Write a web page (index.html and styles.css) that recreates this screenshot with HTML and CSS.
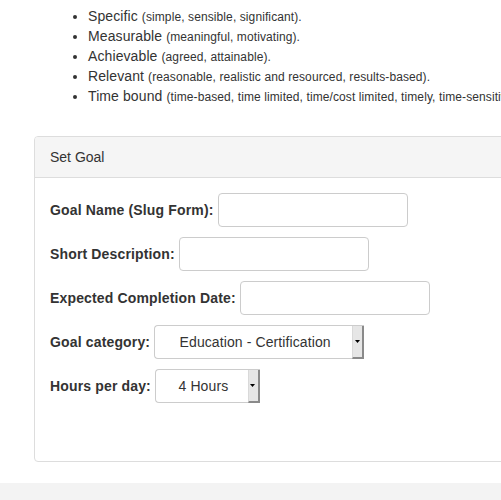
FILE: index.html
```html
<!DOCTYPE html>
<html lang="en">
<head>
<meta charset="utf-8">
<title>Set Goal</title>
<link rel="stylesheet" href="styles.css">
</head>
<body>
<div class="page">
  <ul class="smart">
    <li>Specific <small>(simple, sensible, significant).</small></li>
    <li>Measurable <small>(meaningful, motivating).</small></li>
    <li>Achievable <small>(agreed, attainable).</small></li>
    <li>Relevant <small>(reasonable, realistic and resourced, results-based).</small></li>
    <li>Time bound <small>(time-based, time limited, time/cost limited, timely, time-sensitive).</small></li>
  </ul>

  <section class="panel">
    <div class="panel-heading">Set Goal</div>
    <form class="panel-body">
      <div class="row">
        <label for="slug">Goal Name (Slug Form):</label>
        <input id="slug" class="field" type="text">
      </div>
      <div class="row">
        <label for="desc">Short Description:</label>
        <input id="desc" class="field" type="text">
      </div>
      <div class="row">
        <label for="date">Expected Completion Date:</label>
        <input id="date" class="field" type="text">
      </div>
      <div class="row">
        <label for="cat">Goal category:</label>
        <div class="select select-wide">
          <select id="cat"><option>Education - Certification</option></select>
          <span class="select-btn"><svg width="5" height="3" viewBox="0 0 5 3"><polygon points="0,0 5,0 2.5,3" fill="#000"/></svg></span>
        </div>
      </div>
      <div class="row">
        <label for="hours">Hours per day:</label>
        <div class="select select-narrow">
          <select id="hours"><option>4 Hours</option></select>
          <span class="select-btn"><svg width="5" height="3" viewBox="0 0 5 3"><polygon points="0,0 5,0 2.5,3" fill="#000"/></svg></span>
        </div>
      </div>
    </form>
  </section>

  <div class="band"></div>
</div>
</body>
</html>
```

FILE: styles.css
```css
html, body {
  margin: 0;
  padding: 0;
  background: #fff;
}

.page {
  width: 501px;
  height: 500px;
  overflow: hidden;
  font-family: "Liberation Sans", Arial, Helvetica, sans-serif;
  font-size: 14px;
  color: #333;
}

.smart {
  margin: 6px 0 0;
  padding-left: 88px;
  line-height: 20px;
  letter-spacing: 0.1px;
}

.smart li {
  white-space: nowrap;
  height: 20px;
}

.smart small {
  font-size: 12px;
  line-height: 1;
}

.panel {
  margin: 30px 0 0 34px;
  width: 560px;
  border: 1px solid #ddd;
  border-radius: 4px;
  background: #fff;
}

.panel-heading {
  padding: 10px 15px;
  line-height: 20px;
  background: #f5f5f5;
  border-bottom: 1px solid #ddd;
  border-radius: 3px 3px 0 0;
}

.panel-body {
  margin: 0;
  padding: 15px 15px 48px;
}

.row {
  display: flex;
  align-items: center;
  gap: 4px;
  height: 34px;
  margin-bottom: 10px;
}

.row label {
  font-weight: bold;
  letter-spacing: 0.15px;
}

.field {
  box-sizing: border-box;
  width: 190px;
  height: 34px;
  margin: 0;
  padding: 6px 12px;
  border: 1px solid #ccc;
  border-radius: 4px;
  background: #fff;
  font: inherit;
}

.select {
  box-sizing: border-box;
  display: flex;
  height: 34px;
  border: 1px solid #ccc;
  border-right: none;
  border-radius: 4px 0 0 4px;
  background: #fff;
}

.select-wide { width: 210px; }
.select-narrow { width: 105px; }

.select select {
  flex: 1;
  min-width: 0;
  appearance: none;
  -webkit-appearance: none;
  border: none;
  background: transparent;
  font: inherit;
  letter-spacing: 0.1px;
  color: #333;
  padding: 0 0 0 3px;
  text-align: center;
  text-align-last: center;
  outline: none;
}

.select-btn {
  box-sizing: border-box;
  width: 12px;
  display: flex;
  align-items: center;
  justify-content: center;
  background: #e6e6e6;
  border-left: 1px solid #d9d9d9;
  border-right: 2px solid #8a8a8a;
  border-bottom: 2px solid #8a8a8a;
  margin-bottom: -1px;
}

.select-btn svg {
  display: block;
  margin-right: 1px;
}

.band {
  margin-top: 21px;
  height: 40px;
  background: #f3f3f3;
}
```
